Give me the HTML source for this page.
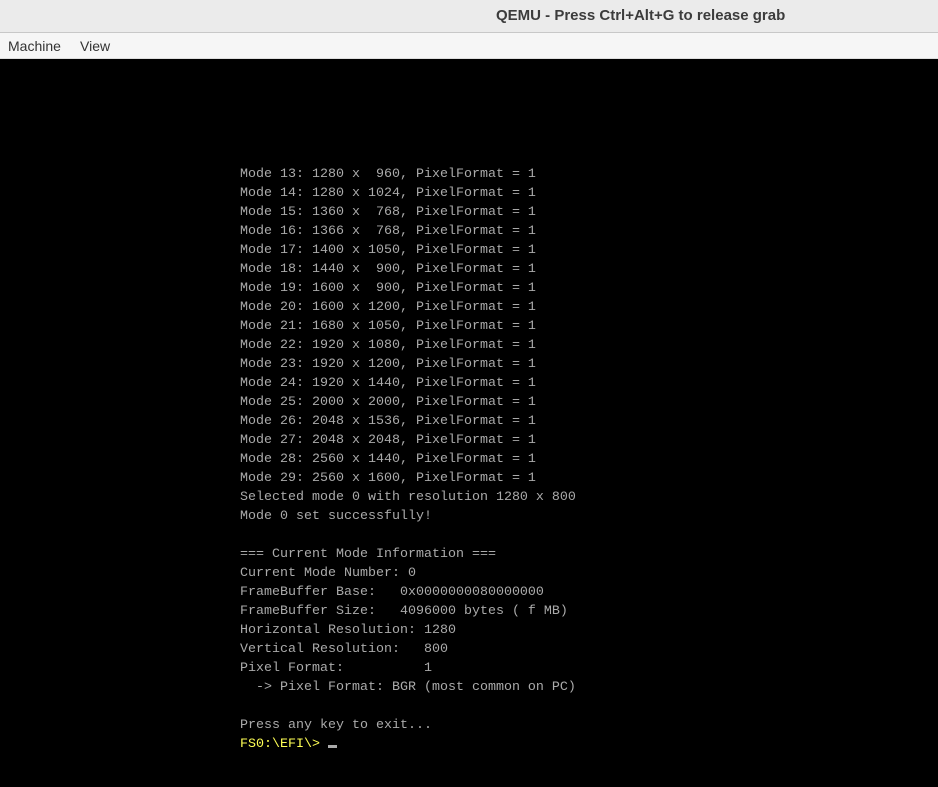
<!DOCTYPE html>
<html><head><meta charset="utf-8"><style>
html,body{margin:0;padding:0;width:938px;height:787px;overflow:hidden;background:#000}
#title{position:absolute;left:0;top:0;width:938px;height:32px;background:#ebebeb;border-bottom:1px solid #c8c8c8;font:bold 15px "Liberation Sans",sans-serif;color:#3c3c3c;text-align:center;line-height:31px}
#title span{position:absolute;left:496px;top:0}
#menu{position:absolute;left:0;top:33px;width:938px;height:25px;background:#f6f6f6;border-bottom:1px solid #ddd;font:14px "Liberation Sans",sans-serif;color:#333;line-height:26px}
#menu span{position:absolute}
#scr{position:absolute;left:0;top:59px;width:938px;height:728px;background:#000}
pre{position:absolute;left:240px;top:165px;margin:0;font:13.33px/19px "Liberation Mono",monospace;color:#aaa;letter-spacing:0;transform:scaleY(1.1);transform-origin:0 0}
.y{color:#ffff55}
.cur{display:inline-block;width:9px;height:3px;background:#aaa;vertical-align:-1px}
</style></head><body>
<div id="title"><span>QEMU - Press Ctrl+Alt+G to release grab</span></div>
<div id="menu"><span style="left:8px">Machine</span><span style="left:80px">View</span></div>
<div id="scr"></div>
<pre style="transform:none">Mode 13: 1280 x  960, PixelFormat = 1
Mode 14: 1280 x 1024, PixelFormat = 1
Mode 15: 1360 x  768, PixelFormat = 1
Mode 16: 1366 x  768, PixelFormat = 1
Mode 17: 1400 x 1050, PixelFormat = 1
Mode 18: 1440 x  900, PixelFormat = 1
Mode 19: 1600 x  900, PixelFormat = 1
Mode 20: 1600 x 1200, PixelFormat = 1
Mode 21: 1680 x 1050, PixelFormat = 1
Mode 22: 1920 x 1080, PixelFormat = 1
Mode 23: 1920 x 1200, PixelFormat = 1
Mode 24: 1920 x 1440, PixelFormat = 1
Mode 25: 2000 x 2000, PixelFormat = 1
Mode 26: 2048 x 1536, PixelFormat = 1
Mode 27: 2048 x 2048, PixelFormat = 1
Mode 28: 2560 x 1440, PixelFormat = 1
Mode 29: 2560 x 1600, PixelFormat = 1
Selected mode 0 with resolution 1280 x 800
Mode 0 set successfully!

=== Current Mode Information ===
Current Mode Number: 0
FrameBuffer Base:   0x0000000080000000
FrameBuffer Size:   4096000 bytes ( f MB)
Horizontal Resolution: 1280
Vertical Resolution:   800
Pixel Format:          1
  -&gt; Pixel Format: BGR (most common on PC)

Press any key to exit...
<span class="y">FS0:\EFI\&gt;</span> <span class="cur"></span></pre>
</body></html>
